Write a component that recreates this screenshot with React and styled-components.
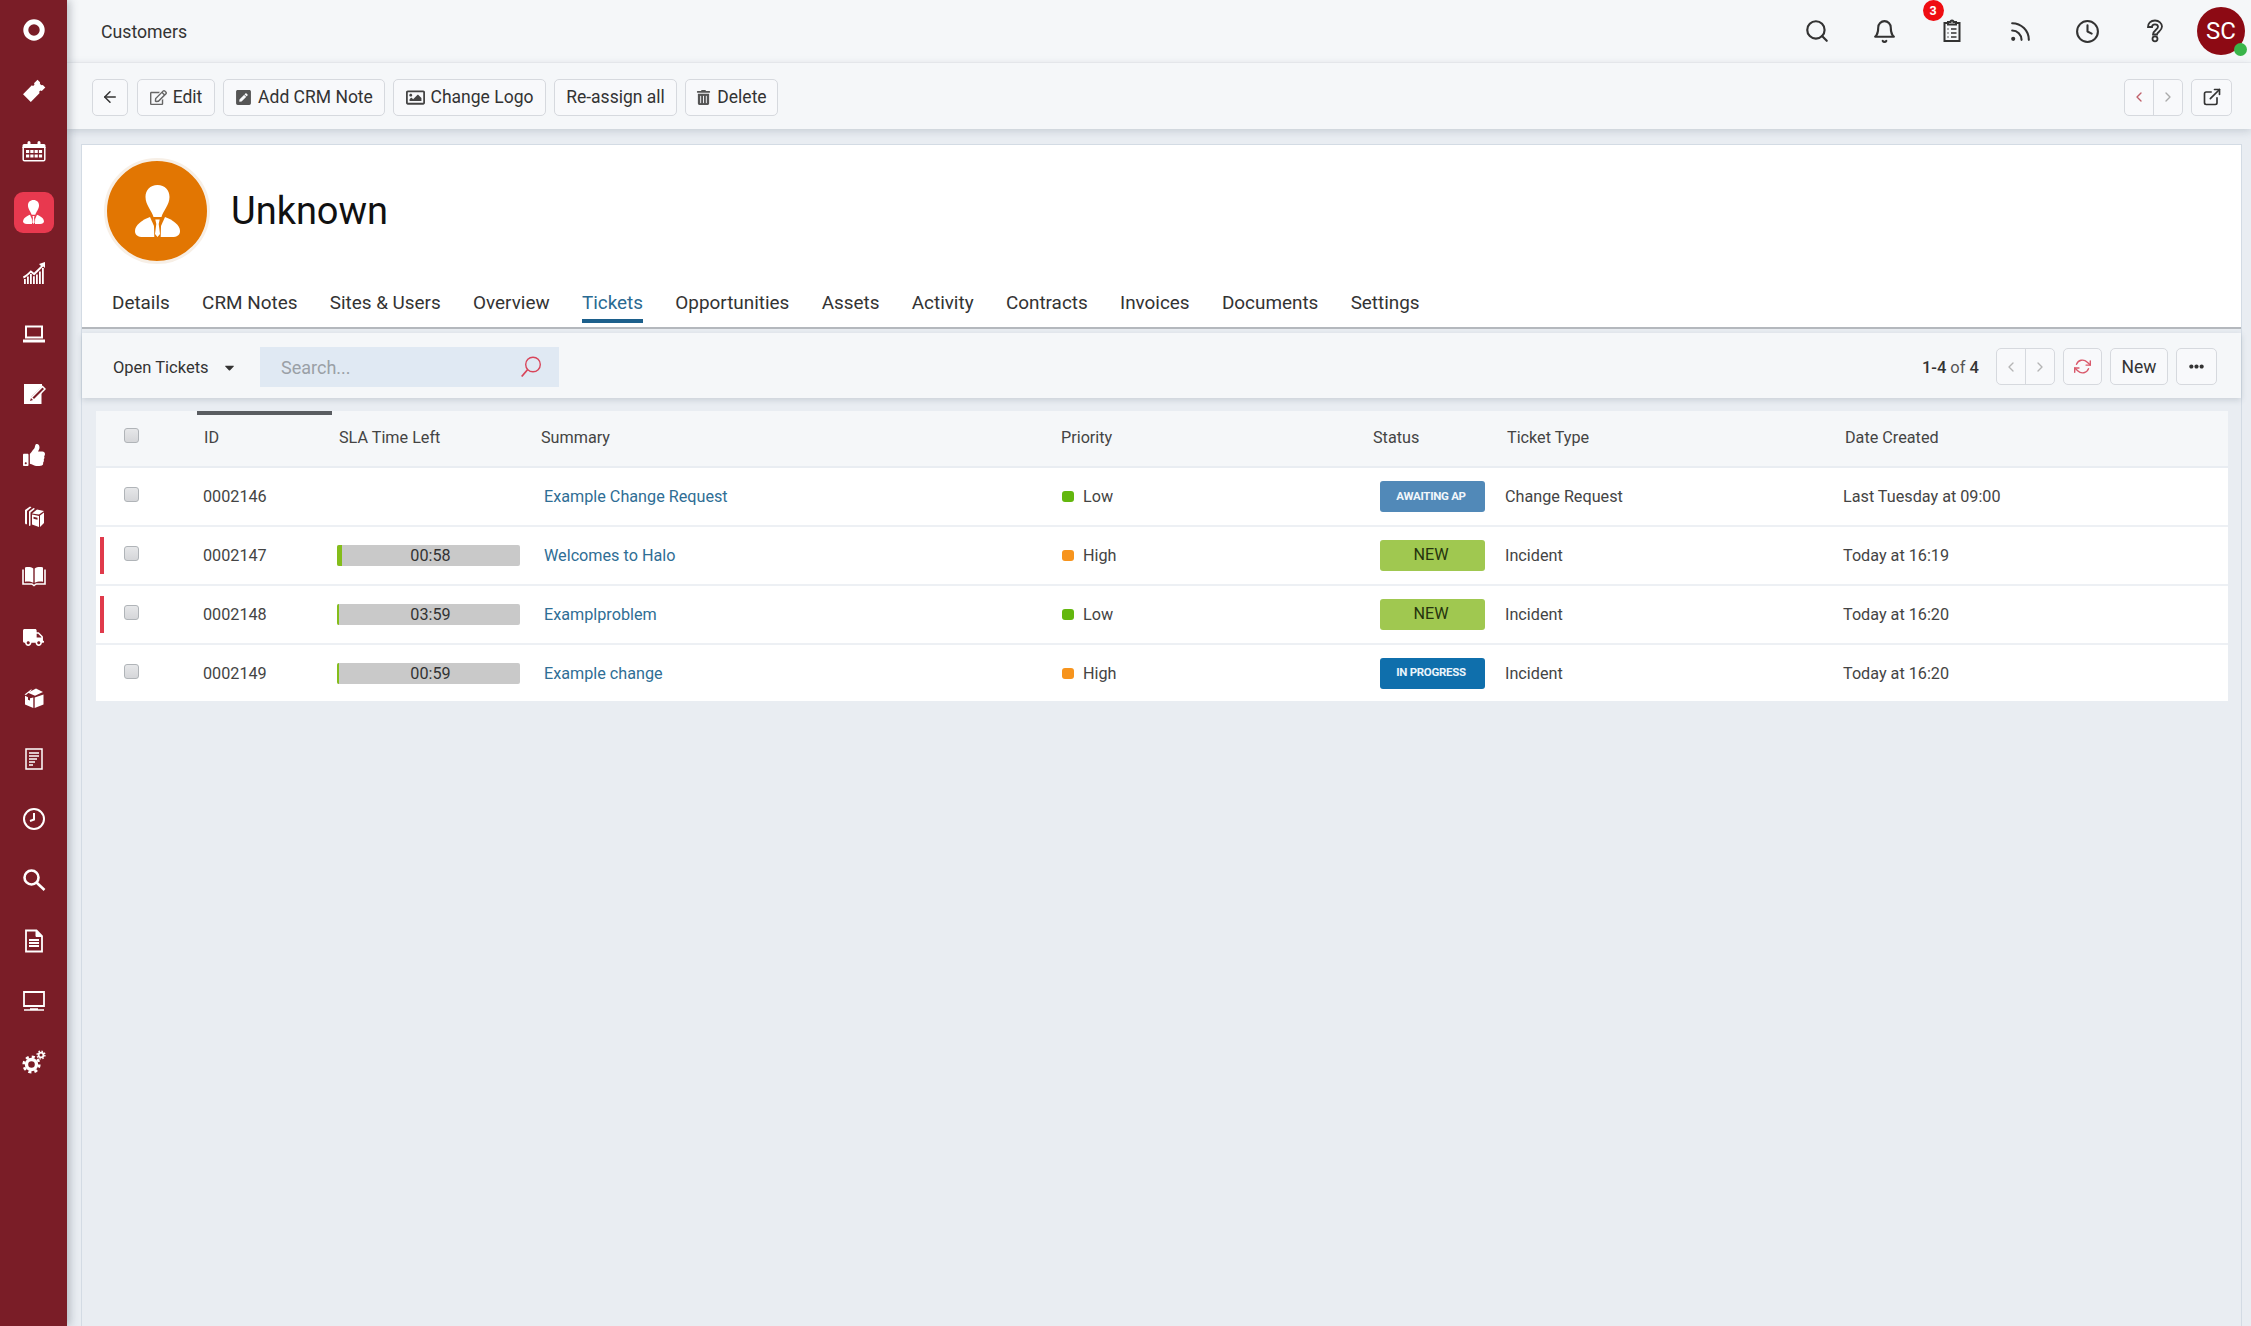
import React from "react";
import styled, { createGlobalStyle } from "styled-components";
import {
  FiSearch, FiBell, FiRss, FiClock, FiArrowLeft, FiChevronLeft, FiChevronRight, FiExternalLink, FiRefreshCw,
} from "react-icons/fi";
import { FaThumbsUp, FaTruck, FaRegEdit, FaTrashAlt, FaRegImage, FaPenSquare, FaCaretDown, FaEllipsisH } from "react-icons/fa";

const GlobalStyle = createGlobalStyle`
  html, body { margin: 0; padding: 0; height: 100%; background: #e9edf2; }
  body { font-family: Roboto, "Liberation Sans", sans-serif; color: #333; overflow: hidden; }
  * { box-sizing: border-box; }
`;

const Shell = styled.div`
  display: flex;
  width: 2251px;
  height: 1326px;
`;
const Sidebar = styled.nav`
  width: 67px;
  flex: none;
  background: #7a1d27;
  display: flex;
  flex-direction: column;
  align-items: center;
  position: relative;
  z-index: 3;
  box-shadow: 3px 0 8px rgba(60, 70, 85, 0.3);
`;
const NavSlot = styled.div`
  width: 40px;
  height: 60.7px;
  display: flex;
  align-items: center;
  justify-content: center;
  color: #fff;
  flex: none;
  &::before {
    content: "";
    display: ${(p) => (p.$active ? "block" : "none")};
    position: absolute;
    width: 40px;
    height: 41px;
    border-radius: 9px;
    background: #e8394f;
  }
  & > svg { position: relative; }
`;
const Main = styled.div`
  flex: 1;
  min-width: 0;
  display: flex;
  flex-direction: column;
`;
const TopBar = styled.header`
  height: 63px;
  flex: none;
  background: #f5f7f9;
  border-bottom: 1px solid #eef0f3;
  display: flex;
  align-items: center;
  justify-content: space-between;
  padding: 0 6px 0 34px;
`;
const PageTitle = styled.div`
  font-size: 17.7px;
  color: #333;
  margin-top: 2px;
`;
const TopIcons = styled.div`
  display: flex;
  align-items: center;
`;
const TopIcon = styled.div`
  width: 67.6px;
  height: 48px;
  display: flex;
  align-items: center;
  justify-content: center;
  color: #333;
  position: relative;
`;
const CountBadge = styled.span`
  position: absolute;
  left: 4px;
  top: -7px;
  width: 21px;
  height: 21px;
  border-radius: 50%;
  background: #ef0d12;
  color: #fff;
  font-size: 12.5px;
  font-weight: 700;
  display: flex;
  align-items: center;
  justify-content: center;
`;
const UserAvatar = styled.div`
  width: 48px;
  height: 48px;
  border-radius: 50%;
  margin-left: 8px;
  background: #8d0a14;
  color: #fff;
  font-size: 24px;
  display: flex;
  align-items: center;
  justify-content: center;
  position: relative;
  &::after {
    content: "";
    position: absolute;
    width: 13px;
    height: 13px;
    right: -2px;
    bottom: -1px;
    border-radius: 50%;
    background: #3ab54a;
  }
`;
const Toolbar = styled.div`
  height: 66px;
  flex: none;
  background: #f5f7f9;
  display: flex;
  align-items: center;
  justify-content: space-between;
  padding: 2px 19px 0 25px;
  box-shadow: 0 2px 8px rgba(70, 85, 105, 0.22);
  position: relative;
  z-index: 2;
`;
const BtnGroup = styled.div`
  display: flex;
  gap: 8px;
`;
const Btn = styled.button`
  height: 37px;
  width: ${(p) => p.$w}px;
  flex: none;
  padding: 0;
  background: #f8f9fb;
  border: 1px solid #d6d9de;
  border-radius: 5px;
  font-family: inherit;
  font-size: 17.5px;
  color: #333;
  display: inline-flex;
  align-items: center;
  justify-content: center;
  gap: 6px;
  & > svg { flex: none; }
`;
const BackBtn = styled(Btn)`
  margin-right: 1px;
`;
const Pager = styled.div`
  display: flex;
  height: 37px;
  width: ${(p) => p.$w}px;
  background: #f8f9fb;
  border: 1px solid #d6d9de;
  border-radius: 5px;
  flex: none;
`;
const PagerHalf = styled.div`
  flex: 1;
  display: flex;
  align-items: center;
  justify-content: center;
  color: ${(p) => p.$c};
  font-size: 16px;
  & + & { border-left: 1px solid #d6d9de; }
`;
const Content = styled.div`
  flex: 1;
  min-height: 0;
  padding: 15px 9px 0 14px;
  display: flex;
`;
const Card = styled.section`
  flex: 1;
  min-width: 0;
  background: #e9edf2;
  border: 1px solid #d3dbe4;
  border-bottom: none;
  display: flex;
  flex-direction: column;
`;
const CardHead = styled.div`
  background: #fff;
  height: 184px;
  flex: none;
  border-bottom: 2px solid #b4b8bd;
  padding: 13px 0 0 24px;
`;
const Identity = styled.div`
  display: flex;
  align-items: center;
  gap: 21px;
`;
const BigAvatar = styled.div`
  width: 106px;
  height: 106px;
  border-radius: 50%;
  background: #e27602;
  border: 3px solid #f7efe6;
  margin-left: -2px;
  display: flex;
  align-items: center;
  justify-content: center;
  flex: none;
  color: #fff;
`;
const Name = styled.h1`
  margin: 0;
  font-size: 38px;
  font-weight: 400;
  color: #111;
  line-height: 1;
`;
const Tabs = styled.div`
  display: flex;
  gap: 32.3px;
  margin: 23px 0 0 6px;
`;
const Tab = styled.div`
  font-size: 18.9px;
  height: 36px;
  line-height: 32px;
  color: ${(p) => (p.$active ? "#2a6a92" : "#333")};
  border-bottom: 4px solid ${(p) => (p.$active ? "#1c5f8b" : "transparent")};
`;
const FilterBar = styled.div`
  margin-top: 4px;
  height: 65px;
  flex: none;
  background: #f5f7f9;
  box-shadow: 0 2px 6px rgba(70, 85, 105, 0.2);
  display: flex;
  align-items: center;
  padding: 2px 24px 0 31px;
  position: relative;
`;
const ListSelect = styled.div`
  width: 147px;
  display: flex;
  align-items: center;
  font-size: 16.5px;
  color: #333;
  gap: 13px;
  margin-top: 2px;
`;
const SearchBox = styled.div`
  width: 299px;
  height: 40px;
  background: #e0e9f3;
  padding: 1px 16px 0 21px;
  display: flex;
  align-items: center;
  justify-content: space-between;
  font-size: 18px;
  color: #9aa0a6;
`;
const FilterRight = styled.div`
  margin-left: auto;
  display: flex;
  align-items: center;
  gap: 8px;
`;
const Count = styled.div`
  font-size: 16.5px;
  color: #555;
  margin-right: 9px;
  padding-top: 2px;
  & b { font-weight: 500; color: #333; }
`;
const Table = styled.div`
  margin: 13px 13px 0 14px;
  position: relative;
`;
const COLS = "101px 135px 200px 520px 313px 132px 338px 1fr";
const HeadRow = styled.div`
  display: grid;
  grid-template-columns: ${COLS};
  height: 57px;
  padding-bottom: 3px;
  background: #f5f7f9;
  align-items: center;
  font-size: 16.2px;
  color: #444;
  border-bottom: 2px solid #e9edf2;
  position: relative;
  &::before {
    content: "";
    position: absolute;
    left: 101px;
    top: 0;
    width: 135px;
    height: 4px;
    background: #5a5d61;
  }
`;
const Row = styled.div`
  display: grid;
  grid-template-columns: ${COLS};
  height: 59px;
  background: #fff;
  align-items: center;
  font-size: 16.2px;
  color: #444;
  border-bottom: 2px solid #edf0f4;
  position: relative;
  &:last-child { border-bottom: none; height: 56px; }
  &::before {
    content: "";
    display: ${(p) => (p.$flag ? "block" : "none")};
    position: absolute;
    left: 4px;
    top: 10px;
    width: 4px;
    height: 37px;
    background: #e03a4b;
  }
`;
const Cell = styled.div`
  padding-left: ${(p) => p.$pl}px;
  display: flex;
  align-items: center;
  min-width: 0;
`;
const Check = styled.span`
  width: 15px;
  height: 15px;
  margin-left: 28px;
  margin-top: -4px;
  border: 1px solid #b0b4b8;
  border-radius: 3px;
  background: linear-gradient(#e6e7e9, #d5d6d9);
  display: block;
`;
const SlaBar = styled.div`
  width: 183px;
  height: 21px;
  background: #c9c9c9;
  border-radius: 2px;
  overflow: hidden;
  position: relative;
  display: flex;
  align-items: center;
  justify-content: center;
  font-size: 16.2px;
  color: #333;
  padding-left: 4px;
`;
const SlaFill = styled.span`
  position: absolute;
  left: 0;
  top: 0;
  bottom: 0;
  width: ${(p) => p.$w}px;
  background: #84bd1a;
`;
const Link = styled.span`
  color: #2f6e95;
`;
const Dot = styled.span`
  width: 12px;
  height: 11px;
  border-radius: 3px;
  margin-right: 9px;
  background: ${(p) => p.$c};
`;
const Status = styled.div`
  width: 105px;
  height: 31px;
  border-radius: 3px;
  background: ${(p) => p.$bg};
  color: ${(p) => p.$c};
  font-size: ${(p) => (p.$small ? "11.5px" : "16.2px")};
  font-weight: ${(p) => (p.$small ? 700 : 400)};
  letter-spacing: ${(p) => (p.$small ? "-0.3px" : "0")};
  display: flex;
  align-items: center;
  justify-content: center;
  padding-bottom: 2px;
  padding-right: 3px;
`;

const Ring = () => (
  <svg width="24" height="24" viewBox="0 0 24 24"><circle cx="12" cy="12" r="8.2" fill="none" stroke="currentColor" strokeWidth="5" /></svg>
);
const Ticket = () => (
  <svg width="24" height="24" viewBox="0 0 24 24" fill="currentColor">
    <path transform="rotate(-45 12 12)" d="M2 6.500H14.500a1.500 1.500 0 0 0 3 0H22.500V10a2.200 2.200 0 0 0 0 4v3.500H17.500a1.500 1.500 0 0 0-3 0H2z" />
  </svg>
);
const Calendar = () => (
  <svg width="24" height="21" viewBox="0 0 24 21" fill="currentColor">
    <path d="M2 3h3.500V1.500a1.200 1.200 0 0 1 3 0V3h7V1.500a1.200 1.200 0 0 1 3 0V3H22a1.500 1.500 0 0 1 1.500 1.500V7H.5V4.500A1.500 1.500 0 0 1 2 3z" />
    <path d="M1.200 6v12.500A1.300 1.300 0 0 0 2.500 19.800h19a1.300 1.300 0 0 0 1.300-1.300V6" fill="none" stroke="currentColor" strokeWidth="1.500" />
    <path d="M4 9h3.200v3H4zm4.300 0h3.200v3H8.300zm4.300 0h3.200v3h-3.200zm4.300 0h3.200v3h-3.200zM4 13.500h3.200v3H4zm4.300 0h3.200v3H8.300zm4.300 0h3.200v3h-3.200zm4.300 0h3.200v3h-3.200z" />
  </svg>
);
const Person = ({ w = 21, h = 24 }) => (
  <svg width={w} height={h} viewBox="0 0 45 52" fill="currentColor">
    <path d="M22.500 0C30 0 34.500 5 34.500 12 34.500 20 28 26 26.500 32h-8C17 26 10.500 20 10.500 12 10.500 5 15 0 22.500 0z" />
    <path d="M15 32C7 35 0 40 0 46c0 4 3 6 8 6h11.300l-.3-11z" />
    <path d="M30 32c8 3 15 8 15 14 0 4-3 6-8 6H25.700l.3-11z" />
    <path d="M20.300 34.500h4.400L23.700 39l1.300 10-2.500 3-2.500-3 1.300-10z" />
  </svg>
);
const Growth = () => (
  <svg width="24" height="24" viewBox="0 0 24 24" fill="currentColor">
    <path d="M2 18h1.800v5H2zm3-2.500h1.800V23H5zm3-2.500h1.800v10H8zm3 2.200h1.800V23H11zm3-1.700h1.800V23H14zm3-3h1.800V23H17zm3-3.500h1.800V23H20z" />
    <path d="M1 15.500c3-1.500 5.500-4 7.800-6.300l3.200 2.500 7-6.800L17 3l6-2v6l-1.800-1.500-9 9-3.300-2.700C6.500 14.200 4 16.300 1.700 17.500z" />
  </svg>
);
const Laptop = () => (
  <svg width="24" height="24" viewBox="0 0 24 24" fill="currentColor">
    <path d="M3 3.500h18v13H3zm2 2v9h14v-9z" fillRule="evenodd" />
    <path d="M1 17.500h22v3H1z" />
  </svg>
);
const NoteEdit = () => (
  <svg width="24" height="24" viewBox="0 0 24 24" fill="currentColor">
    <path fillRule="evenodd" d="M2 2h18v2.500L9.500 14.500 8 19l4.500-1.500 7-7V22H2z" />
    <path d="M20.500 4.500 23 7 12 18l-2.500-2.500z" fill="none" stroke="currentColor" strokeWidth="1.500" />
  </svg>
);
const Books = () => (
  <svg width="24" height="24" viewBox="0 0 24 24" fill="currentColor">
    <path d="M3 6l5-3.500 1.500.8L5 7v13l-1 .6C3.300 20.200 3 19.500 3 19z" />
    <path d="M7 7.500 11.500 4l1.500.8L8.500 8.500v13L7 22z" />
    <path d="M10 9.500 15 5.500l7 1.500L17 10.500z" />
    <path fillRule="evenodd" d="M10 10.500l7 1.500v11l-7-2.500zM11.500 12.800v2l4 1v-2z" />
    <path d="M18 11.500 22 8.500v10.500L18 23z" />
  </svg>
);
const OpenBook = () => (
  <svg width="24" height="22" viewBox="0 0 24 22" fill="currentColor">
    <path d="M3 1.500c3-.7 6-.5 8.300 1v14.300C9 15.500 6 15.200 3 15.700zM21 1.500c-3-.7-6-.5-8.300 1v14.300c2.300-1.300 5.300-1.600 8.300-1.100z" />
    <path d="M1 3.500v14.500h8.500c1 0 1.500 1 2.500 1.500 1-.5 1.500-1.500 2.500-1.500H23V3.500" fill="none" stroke="currentColor" strokeWidth="1.600" />
  </svg>
);
const Box = () => (
  <svg width="24" height="24" viewBox="0 0 24 24" fill="currentColor">
    <path d="M11.300 11.500V22L3 18.500V9.800l3 1.500v2.500l2 .8v-2.300z" />
    <path d="M12.700 11.500V22L21.500 18.500V8.500z" />
    <path d="M2.500 8.500 9 3.500l1 .3L4 9zM13 9.800l-7-3L14 2.500l7 3.500z" />
  </svg>
);
const DocLines = () => (
  <svg width="24" height="24" viewBox="0 0 24 24" fill="none" stroke="currentColor"><path strokeWidth="1.500" d="M4 2h16v20H4z" /><path strokeWidth="1.700" d="M7 6h10M7 9h10M7 12h8M7 15h6M7 18h4" /></svg>
);
const ClockOut = () => (
  <svg width="24" height="24" viewBox="0 0 24 24" fill="none" stroke="currentColor" strokeWidth="2"><circle cx="12" cy="12" r="10" /><path d="M12 6v6.500L8 14" /></svg>
);
const Loupe = () => (
  <svg width="24" height="24" viewBox="0 0 24 24" fill="none" stroke="currentColor" strokeWidth="2.600"><circle cx="9.500" cy="9.500" r="7" /><path d="m14.500 14.500 8 7.500" /></svg>
);
const FileLines = () => (
  <svg width="24" height="24" viewBox="0 0 24 24" fill="none" stroke="currentColor"><path strokeWidth="1.800" d="M4 1.500h10.500L20 7v15.500H4z" /><path strokeWidth="1" fill="currentColor" d="M14 2v5.500h6z" /><path strokeWidth="1.800" d="M7 11h10M7 14h10M7 17h10" /></svg>
);
const Monitor = () => (
  <svg width="24" height="24" viewBox="0 0 24 24" fill="none" stroke="currentColor"><path strokeWidth="1.800" d="M2 3h20v14H2z" /><path strokeWidth="1.600" d="M8 20h8M2 21h20" /></svg>
);
const Cogs = () => (
  <svg width="24" height="24" viewBox="0 0 24 24" fill="none" stroke="currentColor">
    <circle cx="9.500" cy="14.500" r="5" strokeWidth="3.400" />
    <circle cx="9.500" cy="14.500" r="7.800" strokeWidth="2.600" strokeDasharray="3.100 3.030" />
    <circle cx="19" cy="5" r="2.400" strokeWidth="1.800" />
    <circle cx="19" cy="5" r="3.900" strokeWidth="1.400" strokeDasharray="1.500 1.560" />
  </svg>
);
const Clipboard = () => (
  <svg width="24" height="24" viewBox="0 0 24 24" fill="none" stroke="currentColor" strokeWidth="2"><path d="M8 4H4.500v18h15V4H16" /><path d="M8 5.500h8V3h-2.500a1.500 1.500 0 0 0-3 0H8z" /><path d="M7.500 10h1m2.500 0h5.500M7.500 14h1m2.500 0h5.500M7.500 18h1m2.500 0h5.500" strokeWidth="1.600" /></svg>
);
const HelpMark = () => (
  <svg width="24" height="24" viewBox="0 0 24 24" fill="none" stroke="currentColor" strokeWidth="1.800">
    <path d="M12 1.500C7.500 1.500 5 4.500 5 8h4c0-1.700 1.300-2.700 3-2.700s3 1 3 2.500c0 2.500-5 3.700-5 7.700h4c0-2.500 5-3.500 5-7.900 0-3.300-3-6.100-7-6.100z" />
    <circle cx="12" cy="19.800" r="2.500" />
  </svg>
);
const SearchOut = () => (
  <svg width="24" height="24" viewBox="0 0 24 24" fill="none" stroke="#d8455a" strokeWidth="1.400"><circle cx="14" cy="9.500" r="7.300" /><path d="m8.700 14.500-6 7" strokeWidth="1.800" /></svg>
);

const navItems = [
  [<Ring />], [<Ticket />], [<Calendar />], [<Person />, true], [<Growth />], [<Laptop />],
  [<NoteEdit />], [<FaThumbsUp size={22} />], [<Books />], [<OpenBook />], [<FaTruck size={21} />],
  [<Box />], [<DocLines />], [<ClockOut />], [<Loupe />], [<FileLines />], [<Monitor />], [<Cogs />],
];

const tabNames = ["Details", "CRM Notes", "Sites & Users", "Overview", "Tickets", "Opportunities", "Assets", "Activity", "Contracts", "Invoices", "Documents", "Settings"];

const tickets = [
  { id: "0002146", summary: "Example Change Request", pri: "Low", status: "AWAITING AP", type: "Change Request", date: "Last Tuesday at 09:00" },
  { id: "0002147", flag: true, sla: "00:58", fill: 5, summary: "Welcomes to Halo", pri: "High", status: "NEW", type: "Incident", date: "Today at 16:19" },
  { id: "0002148", flag: true, sla: "03:59", fill: 1.5, summary: "Examplproblem", pri: "Low", status: "NEW", type: "Incident", date: "Today at 16:20" },
  { id: "0002149", sla: "00:59", fill: 1.5, summary: "Example change", pri: "High", status: "IN PROGRESS", type: "Incident", date: "Today at 16:20" },
];

const statusStyle = {
  "AWAITING AP": { bg: "#5189b8", c: "#f2f7fb", small: true },
  NEW: { bg: "#a0c850", c: "#26340e", small: false },
  "IN PROGRESS": { bg: "#0f6fac", c: "#eaf4fb", small: true },
};

export default function App() {
  return (
    <>
      <GlobalStyle />
      <Shell>
        <Sidebar>
          {navItems.map(([icon, active], i) => (
            <NavSlot key={i} $active={active}>{icon}</NavSlot>
          ))}
        </Sidebar>
        <Main>
          <TopBar>
            <PageTitle>Customers</PageTitle>
            <TopIcons>
              <TopIcon><FiSearch size={26} /></TopIcon>
              <TopIcon><FiBell size={25} /></TopIcon>
              <TopIcon><CountBadge>3</CountBadge><Clipboard /></TopIcon>
              <TopIcon><FiRss size={25} /></TopIcon>
              <TopIcon><FiClock size={25} /></TopIcon>
              <TopIcon><HelpMark /></TopIcon>
              <UserAvatar>SC</UserAvatar>
            </TopIcons>
          </TopBar>
          <Toolbar>
            <BtnGroup>
              <BackBtn $w={36}><FiArrowLeft size={18} /></BackBtn>
              <Btn $w={78}><FaRegEdit size={17} color="#666" />Edit</Btn>
              <Btn $w={162}><FaPenSquare size={17} color="#555" />Add CRM Note</Btn>
              <Btn $w={153}><FaRegImage size={19} color="#444" />Change Logo</Btn>
              <Btn $w={123}>Re-assign all</Btn>
              <Btn $w={93}><FaTrashAlt size={15} color="#555" />Delete</Btn>
            </BtnGroup>
            <BtnGroup>
              <Pager $w={59}>
                <PagerHalf $c="#c0606a"><FiChevronLeft /></PagerHalf>
                <PagerHalf $c="#aaa"><FiChevronRight /></PagerHalf>
              </Pager>
              <Btn $w={41}><FiExternalLink size={20} /></Btn>
            </BtnGroup>
          </Toolbar>
          <Content>
            <Card>
              <CardHead>
                <Identity>
                  <BigAvatar><Person w={45} h={52} /></BigAvatar>
                  <Name>Unknown</Name>
                </Identity>
                <Tabs>
                  {tabNames.map((t) => <Tab key={t} $active={t === "Tickets"}>{t}</Tab>)}
                </Tabs>
              </CardHead>
              <FilterBar>
                <ListSelect>Open Tickets <FaCaretDown size={15} /></ListSelect>
                <SearchBox>Search...<SearchOut /></SearchBox>
                <FilterRight>
                  <Count><b>1-4</b> of <b>4</b></Count>
                  <Pager $w={59}>
                    <PagerHalf $c="#b5b5b5"><FiChevronLeft /></PagerHalf>
                    <PagerHalf $c="#b5b5b5"><FiChevronRight /></PagerHalf>
                  </Pager>
                  <Btn $w={39}><FiRefreshCw size={17} color="#d9596b" /></Btn>
                  <Btn $w={58}>New</Btn>
                  <Btn $w={41}><FaEllipsisH size={15} /></Btn>
                </FilterRight>
              </FilterBar>
              <Table>
                <HeadRow>
                  <Cell $pl={0}><Check /></Cell>
                  <Cell $pl={7}>ID</Cell>
                  <Cell $pl={7}>SLA Time Left</Cell>
                  <Cell $pl={9}>Summary</Cell>
                  <Cell $pl={9}>Priority</Cell>
                  <Cell $pl={8}>Status</Cell>
                  <Cell $pl={10}>Ticket Type</Cell>
                  <Cell $pl={10}>Date Created</Cell>
                </HeadRow>
                {tickets.map((t) => {
                  const st = statusStyle[t.status];
                  return (
                    <Row key={t.id} $flag={t.flag}>
                      <Cell $pl={0}><Check /></Cell>
                      <Cell $pl={6}>{t.id}</Cell>
                      <Cell $pl={5}>
                        {t.sla && <SlaBar><SlaFill $w={t.fill} />{t.sla}</SlaBar>}
                      </Cell>
                      <Cell $pl={12}><Link>{t.summary}</Link></Cell>
                      <Cell $pl={10}><Dot $c={t.pri === "Low" ? "#63b70e" : "#f7941d"} />{t.pri}</Cell>
                      <Cell $pl={15}><Status $bg={st.bg} $c={st.c} $small={st.small}>{t.status}</Status></Cell>
                      <Cell $pl={8}>{t.type}</Cell>
                      <Cell $pl={8}>{t.date}</Cell>
                    </Row>
                  );
                })}
              </Table>
            </Card>
          </Content>
        </Main>
      </Shell>
    </>
  );
}
